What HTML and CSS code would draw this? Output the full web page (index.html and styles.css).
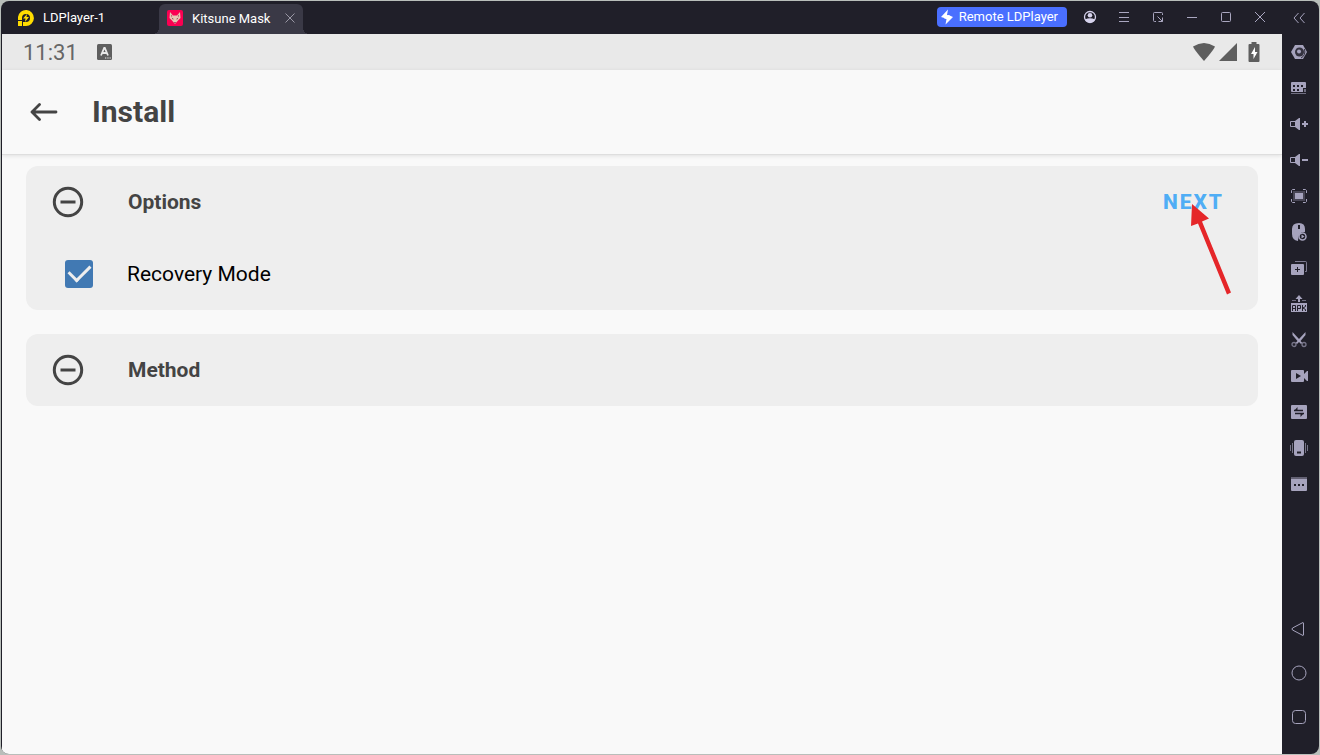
FILE: index.html
```html
<!DOCTYPE html>
<html lang="en">
<head>
    <meta charset="UTF-8">
    <meta name="viewport" content="width=device-width, initial-scale=1.0">
    <title>LDPlayer-1</title>
    <link rel="stylesheet" href="styles.css">
</head>
<body>
    <div class="window">
        <div class="main">
            <!-- Title bar -->
            <header class="title-bar">
                <div class="app-name">
                    <svg width="18" height="18" viewBox="0 0 18 18">
                        <path d="M1 11V8A8 8 0 1 1 9 17H6V13H9A4 4 0 1 0 5 9V11Z" fill="#ffdc00"/>
                        <path d="M1 12H5V17H1Z" fill="#ffdc00"/>
                        <path d="M10 5L6 9.500H8.500L8 13L12 8H9.500Z" fill="#ffdc00"/>
                    </svg>
                    <span>LDPlayer-1</span>
                </div>
                <div class="tab">
                    <svg width="16" height="16" viewBox="0 0 16 16">
                        <rect width="16" height="16" rx="2" fill="#fb0052"/>
                        <path d="M3 2L6 5.500H10L13 2L13.500 8L11 10.500L8 14L5 10.500L2.500 8Z" fill="#e9c6b5"/>
                        <path d="M4 4.500L5.500 6L4 7ZM12 4.500L10.500 6L12 7Z" fill="#b5606a"/>
                        <path d="M4.500 7.500L7 9.200H5.500ZM11.500 7.500L9 9.200H10.500ZM7 12H9L8 13.500Z" fill="#7a3040"/>
                    </svg>
                    <span>Kitsune Mask</span>
                    <button class="tab-close" aria-label="Close tab">
                        <svg width="10" height="10" viewBox="0 0 10 10" stroke="#9a98a5" fill="none"><path d="M.5 .5L9.500 9.500M9.500 .5L.5 9.500"/></svg>
                    </button>
                </div>
                <button class="remote">
                    <svg width="14" height="16" viewBox="0 0 14 16" fill="#fff"><path d="M8 .5L1 8L6 9.500L10 6.500L7 6Z"/><path d="M5.500 15.500L13 8L8.500 6L4 9.500L6.500 10Z"/></svg>
                    Remote LDPlayer
                </button>
                <div class="window-buttons">
                    <button aria-label="Account">
                        <svg width="14" height="14" viewBox="0 0 14 14"><circle cx="7" cy="7" r="5.500" fill="none" stroke="#d6d2ec" stroke-width="1.300"/><circle cx="7" cy="5.300" r="2.300" fill="#d6d2ec" stroke="none"/><path d="M2 9.500Q7 7 12 9.500Q10.500 12.800 7 12.800T2 9.500Z" fill="#d6d2ec" stroke="none"/></svg>
                    </button>
                    <button aria-label="Menu">
                        <svg width="12" height="12" viewBox="0 0 12 12"><path d="M1 1.500H11M1 6.500H11M1 10.500H11"/></svg>
                    </button>
                    <button aria-label="Mini window">
                        <svg width="12" height="12" viewBox="0 0 12 12"><path d="M10.500 4V2.500Q10.500 1.500 9.500 1.500H2.500Q1.500 1.500 1.500 2.500V9.500Q1.500 10.500 2.500 10.500H4M5.500 5.500L10.500 10.500M6.500 10.500H10.500V6.500"/></svg>
                    </button>
                    <button aria-label="Minimize">
                        <svg width="12" height="12" viewBox="0 0 12 12"><path d="M1 6.500H11"/></svg>
                    </button>
                    <button aria-label="Maximize">
                        <svg width="12" height="12" viewBox="0 0 12 12"><rect x="1.500" y="1.500" width="9" height="9" rx="1"/></svg>
                    </button>
                    <button aria-label="Close">
                        <svg width="12" height="12" viewBox="0 0 12 12"><path d="M1 1L11 11M11 1L1 11"/></svg>
                    </button>
                </div>
            </header>

            <!-- Android screen -->
            <div class="screen">
                <div class="status-bar">
                    <span class="clock">11:31</span>
                    <svg width="15" height="16" viewBox="0 0 15 16">
                        <rect width="15" height="16" rx="1.500" fill="#5e5e5e"/>
                        <path d="M4 11.500L7.200 4H7.800L11 11.500M5.200 9H9.800" fill="none" stroke="#e8e8e8" stroke-width="1.800"/>
                        <path d="M8 14H9.300M10.300 14H11.600M12.500 14H13.800" stroke="#e8e8e8" stroke-width="1.200"/>
                    </svg>
                    <div class="status-icons">
                        <svg width="24" height="20" viewBox="0 0 24 20"><path d="M1 4.500Q12 -2.500 23 4.500Q22.500 7 12 19Q1.500 7 1 4.500Z"/></svg>
                        <svg width="18" height="18" viewBox="0 0 18 18"><path d="M18 0V18H0Z"/></svg>
                        <svg class="battery" width="12" height="20" viewBox="0 0 12 20"><path d="M3.500 0H8.500V2H10.500Q11.500 2 11.500 3V19Q11.500 20 10.500 20H1.500Q.5 20 .5 19V3Q.5 2 1.500 2H3.500Z"/><path d="M7 5L3 12H5.500V17L9.500 10H7Z" fill="#fff"/></svg>
                    </div>
                </div>

                <div class="toolbar">
                    <button class="back" aria-label="Back">
                        <svg width="28" height="20" viewBox="0 0 28 20"><path d="M26 11H2M9.500 3.500L2 11L9.500 18.500" fill="none" stroke="#444" stroke-width="2.800" stroke-linecap="round" stroke-linejoin="round"/></svg>
                    </button>
                    <h1>Install</h1>
                </div>

                <main class="content">
                    <section class="card">
                        <div class="card-header">
                            <svg width="32" height="32" viewBox="0 0 32 32"><circle cx="16" cy="16" r="13.700"/><path d="M8.500 16H23.500"/></svg>
                            <h2>Options</h2>
                            <button class="next">NEXT</button>
                            <!-- Pointer to the next step -->
                            <svg class="arrow" width="42" height="92" viewBox="0 0 42 92"><path d="M2 0L19 14.500L12 17.500L41 88.500L37 90.500L8 19.500L1 22Z"/></svg>
                        </div>
                        <label class="option">
                            <input type="checkbox" checked>
                            <span>Recovery Mode</span>
                        </label>
                    </section>

                    <section class="card">
                        <div class="card-header">
                            <svg width="32" height="32" viewBox="0 0 32 32"><circle cx="16" cy="16" r="13.700"/><path d="M8.500 16H23.500"/></svg>
                            <h2>Method</h2>
                        </div>
                    </section>
                </main>
            </div>
        </div>

        <!-- Emulator tools -->
        <aside class="sidebar">
            <button class="collapse" aria-label="Collapse">
                <svg width="18" height="18" viewBox="0 0 18 18" fill="none" stroke="#a6a3bd"><path d="M8.500 4L4 9L8.500 14M14.500 4L10 9L14.500 14"/></svg>
            </button>
            <div class="tools">
                <button aria-label="Settings">
                    <svg width="18" height="18" viewBox="0 0 18 18"><path d="M5 2H13L17 9L13 16H5L1 9Z"/><circle cx="9.500" cy="9" r="4.500" fill="#34323f"/><path d="M11 15Q16 12.500 14.500 6" fill="none" stroke="#34323f"/><circle cx="9" cy="8.500" r="2"/></svg>
                </button>
                <button aria-label="Keyboard">
                    <svg width="18" height="18" viewBox="0 0 18 18"><path d="M2 3H15Q16 3 16 4V9H13V13H2Q1 13 1 12V4Q1 3 2 3Z"/><path d="M3 6H5V8H3ZM7 6H9V8H7ZM11 6H13V8H11ZM3 10H5V12H3ZM7 10H9V12H7Z" fill="#201f29"/><path d="M14 10H16V13H14ZM1 14H16V15H1Z" opacity=".6"/></svg>
                </button>
                <button aria-label="Volume up">
                    <svg width="20" height="18" viewBox="0 0 20 18"><path d="M10 3H11V15H10L6 12V6ZM13 8H19V10H13ZM15 6H17V12H15Z"/><path d="M6 6.500H1.500V11.500H6" fill="none" stroke="#a6a3bd"/></svg>
                </button>
                <button aria-label="Volume down">
                    <svg width="20" height="18" viewBox="0 0 20 18"><path d="M10 3H11V15H10L6 12V6ZM13 8H19V10H13Z"/><path d="M6 6.500H1.500V11.500H6" fill="none" stroke="#a6a3bd"/></svg>
                </button>
                <button aria-label="Full screen">
                    <svg width="18" height="18" viewBox="0 0 18 18"><path d="M3 4H15V14H3Z" opacity=".3"/><path d="M5 6H13V12H5Z"/><path d="M1.500 6V3.500L2.500 2.500H5M13 2.500H15.500L16.500 3.500V6M16.500 12V14.500L15.500 15.500H13M5 15.500H2.500L1.500 14.500V12" fill="none" stroke="#a6a3bd"/></svg>
                </button>
                <button aria-label="Operation recorder">
                    <svg width="18" height="20" viewBox="0 0 18 20"><path d="M9 1Q15 1 15 7V10Q8 9 8 19Q2 18 2 12V7Q2 1 9 1Z"/><path d="M8 3H10V7H8Z" fill="#201f29"/><circle cx="12.500" cy="14.500" r="3.500" fill="#201f29" stroke="#a6a3bd" stroke-width="1.500"/><path d="M11.500 12.500L14.500 14.500L11.500 16.500Z"/></svg>
                </button>
                <button aria-label="Multi instance">
                    <svg width="18" height="18" viewBox="0 0 18 18"><path d="M5 2.500H15.500Q16.500 2.500 16.500 3.500V12.500H15" fill="none" stroke="#a6a3bd" opacity=".7"/><rect x="1" y="5" width="13" height="11" rx="1"/><path d="M5 10.500H10M7.500 8V13" stroke="#201f29"/></svg>
                </button>
                <button aria-label="Install APK">
                    <svg width="18" height="18" viewBox="0 0 18 18"><path d="M9 0L12.500 4H10V7H8V4H5.500Z"/><path d="M2 5H6V6H2ZM12 5H16V6H12Z" opacity=".6"/><path d="M1 8H17V17H1Z"/><path d="M2.500 16V10.500H5.500V16M2.500 13.500H5.500M7.500 16V10.500H10.500V13.500H7.500M12.500 10V16M15.500 10V11.500L13 13L15.500 14.500V16" fill="none" stroke="#201f29"/></svg>
                </button>
                <button aria-label="Screenshot">
                    <svg width="18" height="18" viewBox="0 0 18 18"><path d="M2.500 1L9 8L15.500 1V4L10.500 10L12.500 12L11 13L9 11L7 13L5.500 12L7.500 10L2.500 4Z"/><circle cx="4" cy="13.500" r="2" fill="none" stroke="#777589" stroke-width="1.300"/><circle cx="14" cy="13.500" r="2" fill="none" stroke="#777589" stroke-width="1.300"/></svg>
                </button>
                <button aria-label="Video recorder">
                    <svg width="18" height="18" viewBox="0 0 18 18"><path d="M2 3H13Q14 3 14 4V7L17 4H18V14H17L14 11V14Q14 15 13 15H2Q1 15 1 14V4Q1 3 2 3Z"/><path d="M6 6L11 9L6 12Z" fill="#201f29"/></svg>
                </button>
                <button aria-label="Shared folder">
                    <svg width="18" height="18" viewBox="0 0 18 18"><rect x="1" y="2" width="16" height="14" rx="1"/><path d="M4 7.500H13M5 10.500H14" stroke="#201f29" stroke-width="1.500"/><path d="M7.500 4V8H4ZM10.500 14V10H14Z" fill="#201f29"/></svg>
                </button>
                <button aria-label="Shake">
                    <svg width="20" height="18" viewBox="0 0 20 18"><rect x="5" y="1" width="10" height="16" rx="2"/><path d="M8 13.500H12" stroke="#201f29" stroke-width="2"/><path d="M3.500 4V14M16.500 4V14M1.500 6V12M18.500 6V12" fill="none" stroke="#777589"/></svg>
                </button>
                <button aria-label="More">
                    <svg width="18" height="18" viewBox="0 0 18 18"><path d="M1 2H17V4H1Z" opacity=".5"/><path d="M1 4H17V15Q17 16 16 16H2Q1 16 1 15Z"/><path d="M4 9H6V11H4ZM8 9H10V11H8ZM12 9H14V11H12Z" fill="#201f29"/></svg>
                </button>
            </div>
            <div class="nav">
                <button aria-label="Back key">
                    <svg width="18" height="18" viewBox="0 0 18 18"><path d="M13.500 3V15Q13.500 16 12 15L2.500 10Q1.500 9 2.500 8L12 3Q13.500 2 13.500 3Z"/></svg>
                </button>
                <button aria-label="Home key">
                    <svg width="18" height="18" viewBox="0 0 18 18"><circle cx="9" cy="9" r="7"/></svg>
                </button>
                <button aria-label="Recent apps key">
                    <svg width="18" height="18" viewBox="0 0 18 18"><rect x="2.500" y="2.500" width="13" height="13" rx="3"/></svg>
                </button>
            </div>
        </aside>
    </div>
</body>
</html>
```
FILE: styles.css
```css
* {
    margin: 0;
    padding: 0;
    box-sizing: border-box;
}

body {
    font-family: Roboto, "Liberation Sans", sans-serif;
    background: #b9beba;
    height: 100vh;
    padding: 1px;
}

button {
    background: none;
    border: none;
    font-family: inherit;
    cursor: pointer;
    display: flex;
    align-items: center;
    justify-content: center;
}

svg {
    display: block;
    flex-shrink: 0;
}

.window {
    height: 100%;
    display: flex;
    background: #201f29;
    border-radius: 8px;
    overflow: hidden;
    padding-left: 1px;
}

.main {
    flex: 1;
    display: flex;
    flex-direction: column;
}

/* title bar */
.title-bar {
    height: 33px;
    display: flex;
    align-items: center;
    color: #fff;
    font-size: 13px;
}

.app-name {
    width: 157px;
    padding-left: 15px;
    display: flex;
    align-items: center;
    gap: 8px;
}

.tab {
    align-self: flex-end;
    width: 144px;
    height: 30px;
    padding: 0 8px 2px;
    background: #3a3946;
    border-radius: 6px 6px 0 0;
    display: flex;
    align-items: center;
    gap: 9px;
    position: relative;
}

/* curved feet of the active tab */
.tab::before,
.tab::after {
    content: "";
    position: absolute;
    bottom: 0;
    width: 6px;
    height: 6px;
}

.tab::before {
    right: 100%;
    background: radial-gradient(circle at 0 0, transparent 6px, #3a3946 6px);
}

.tab::after {
    left: 100%;
    background: radial-gradient(circle at 100% 0, transparent 6px, #3a3946 6px);
}

.tab-close {
    margin-left: auto;
}

.remote {
    margin-left: auto;
    margin-bottom: 2px;
    height: 20px;
    padding: 0 9px 0 3px;
    background: #4a6fff;
    border-radius: 4px;
    color: #fff;
    font-size: 13px;
    gap: 5px;
}

.window-buttons {
    display: flex;
    margin: 0 5px 1px 6px;
}

.window-buttons button {
    width: 34px;
    height: 32px;
}

.window-buttons svg {
    fill: none;
    stroke: #aaa7c0;
}

/* android screen */
.screen {
    flex: 1;
    background: #f9f9f9;
    color: #444;
}

.status-bar {
    height: 36px;
    padding: 0 21px;
    background: #e9e9e9;
    display: flex;
    align-items: center;
}

.clock {
    width: 74px;
    color: #666;
    font-size: 22px;
}

.status-icons {
    margin-left: auto;
    display: flex;
    align-items: center;
    gap: 3px;
    padding-bottom: 1px;
    fill: #5e5e5e;
}

.battery {
    margin: 0 1px 0 8px;
}

.toolbar {
    height: 85px;
    padding: 0 28px 2px;
    border-bottom: 1px solid #dedede;
    box-shadow: 0 1px 4px rgba(0,0,0,0.1);
    display: flex;
    align-items: center;
    gap: 34px;
}

h1 {
    font-size: 30px;
    font-weight: bold;
}

.content {
    padding: 11px 24px;
    display: flex;
    flex-direction: column;
    gap: 24px;
}

.card {
    background: #eee;
    border-radius: 12px;
}

.card-header {
    height: 72px;
    padding: 0 26px;
    display: flex;
    align-items: center;
    gap: 44px;
    position: relative;
    fill: none;
    stroke: #444;
    stroke-width: 3px;
}

h2 {
    font-size: 21px;
    font-weight: bold;
}

.next {
    margin-left: auto;
    padding: 8px;
    color: #4fadf5;
    font-size: 21px;
    font-weight: 800;
    letter-spacing: 2px;
}

.arrow {
    position: absolute;
    top: 38px;
    right: 26px;
    fill: #e52629;
    stroke: none;
    pointer-events: none;
}

.option {
    height: 72px;
    padding: 0 39px;
    display: flex;
    align-items: center;
    gap: 34px;
    color: #000;
    font-size: 21px;
}

.option input {
    appearance: none;
    width: 28px;
    height: 28px;
    background: #4179b3;
    border-radius: 3px;
    display: flex;
    justify-content: center;
}

.option input:checked::after {
    content: "";
    width: 10px;
    height: 18px;
    border: solid #eee;
    border-width: 0 3px 3px 0;
    transform: rotate(45deg);
}

/* emulator tools */
.sidebar {
    width: 37px;
    display: flex;
    flex-direction: column;
    fill: #a6a3bd;
}

.sidebar button {
    width: 34px;
    height: 36px;
}

.sidebar .collapse {
    height: 33px;
}

.nav {
    margin-top: auto;
    margin-bottom: 15px;
    fill: none;
    stroke: #a6a3bd;
    stroke-width: 1px;
}

.sidebar .nav button {
    height: 44px;
}
```
